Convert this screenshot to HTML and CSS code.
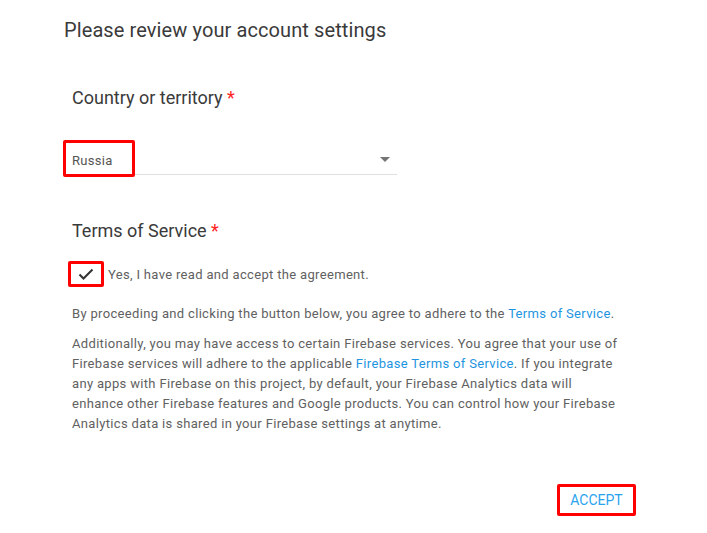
FILE: index.html
```html
<!DOCTYPE html>
<html lang="en">
<head>
<meta charset="utf-8">
<title>Account settings</title>
<link rel="stylesheet" href="styles.css">
</head>
<body>
<div class="dialog">
  <h1 class="title">Please review your account settings</h1>
  <div class="body">
    <h2 class="label">Country or territory <span class="req">*</span></h2>
    <div class="select">
      <span class="select-value">Russia</span>
      <svg class="arrow" width="10" height="5" viewBox="0 0 10 5"><polygon points="0,0 10,0 5,5" fill="#757575"/></svg>
      <span class="mark mark-select"></span>
    </div>
    <h2 class="label label-terms">Terms of Service <span class="req">*</span></h2>
    <label class="check-row">
      <span class="check">
        <svg width="16" height="12" viewBox="0 0 16 12"><polyline points="1.5,6.5 5.5,10.5 14.5,1.5" fill="none" stroke="#333" stroke-width="2"/></svg>
      </span>
      <span class="check-text">Yes, I have read and accept the agreement.</span>
    </label>
    <p class="text p1">By proceeding and clicking the button below, you agree to adhere to the <a href="#">Terms of Service</a>.</p>
    <p class="text p2">Additionally, you may have access to certain Firebase services. You agree that your use of Firebase services will adhere to the applicable <a href="#">Firebase Terms of Service</a>. If you integrate any apps with Firebase on this project, by default, your Firebase Analytics data will enhance other Firebase features and Google products. You can control how your Firebase Analytics data is shared in your Firebase settings at anytime.</p>
    <div class="actions">
      <button class="accept">ACCEPT</button>
    </div>
  </div>
</div>
</body>
</html>
```

FILE: styles.css
```css
html, body {
  margin: 0;
  padding: 0;
  background: #fff;
}
body {
  font-family: Roboto, "Liberation Sans", Arial, sans-serif;
  color: #616161;
}
.dialog {
  padding: 18px 0 0 64px;
  width: 572px;
}
.title {
  margin: 0;
  font-size: 20px;
  line-height: 24px;
  font-weight: 400;
  color: #3a3a3a;
  letter-spacing: 0.1px;
}
.body {
  padding-left: 8px;
}
.label {
  margin: 44px 0 0;
  font-size: 18px;
  line-height: 24px;
  font-weight: 400;
  color: #3a3a3a;
}
.label-terms {
  margin-top: 44px;
}
.req {
  color: #f22;
}
.select {
  position: relative;
  margin: 30px 0 0 -9px;
  width: 318px;
  height: 34px;
  border-bottom: 1px solid #e0e0e0;
  display: flex;
  align-items: center;
  justify-content: space-between;
  padding: 0 7px 0 9px;
  box-sizing: content-box;
}
.select-value {
  font-size: 13px;
  color: #555;
  padding-top: 7px;
  letter-spacing: 0.3px;
}
.arrow {
  display: block;
  margin-top: 4px;
}
.mark {
  position: absolute;
  border: 3px solid #f00;
  border-radius: 2px;
  box-sizing: border-box;
}
.mark-select {
  left: 0;
  top: 0;
  width: 72px;
  height: 37px;
}
.check-row {
  margin: 18px 0 0 -4px;
  display: flex;
  align-items: center;
  height: 26px;
}
.check {
  width: 36px;
  height: 26px;
  border: 3px solid #f00;
  border-radius: 2px;
  box-sizing: border-box;
  display: flex;
  align-items: center;
  justify-content: center;
}
.check svg {
  display: block;
}
.check-text {
  margin-left: 4px;
  font-size: 13px;
  color: #616161;
  letter-spacing: 0.33px;
}
.text {
  margin: 0;
  font-size: 13px;
  line-height: 20px;
  color: #616161;
  width: 550px;
  letter-spacing: 0.33px;
}
.p1 {
  margin-top: 17px;
}
.p2 {
  margin-top: 10px;
}
.text a {
  color: #1e95e0;
  text-decoration: none;
}
.actions {
  display: flex;
  justify-content: flex-end;
  margin-top: 50px;
  width: 564px;
}
.accept {
  width: 79px;
  height: 32px;
  border: 3px solid #f00;
  border-radius: 2px;
  background: #fff;
  color: #29a3ee;
  font-family: Roboto, "Liberation Sans", Arial, sans-serif;
  font-size: 14px;
  padding: 0;
}
```
